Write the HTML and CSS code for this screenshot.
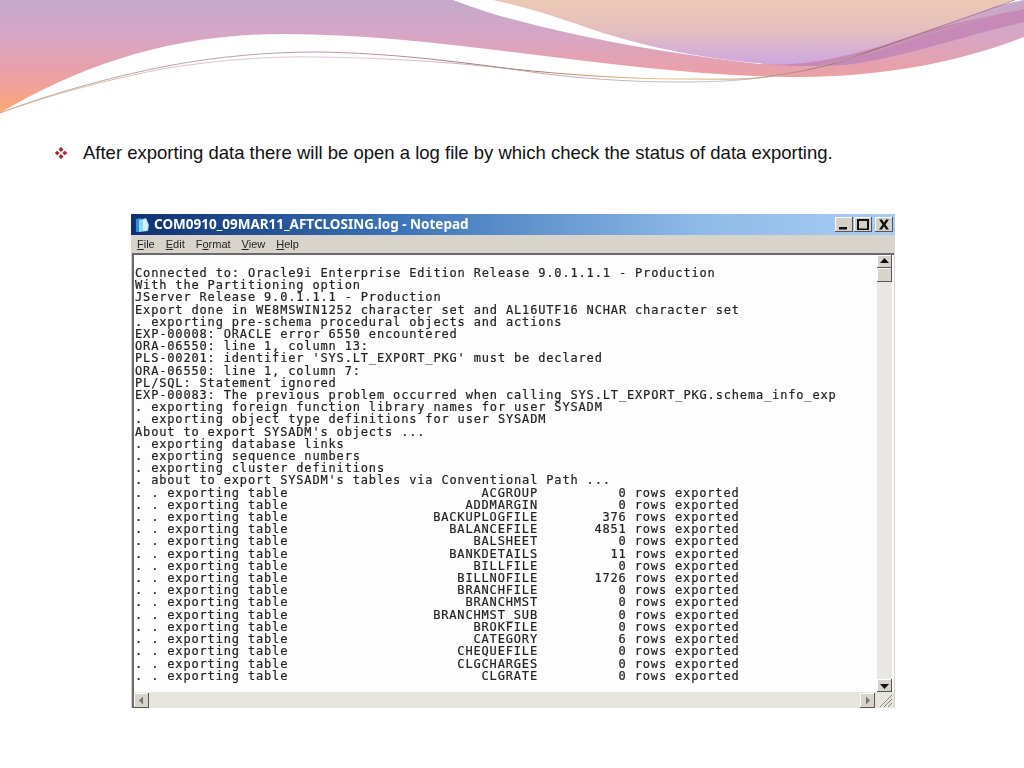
FILE: index.html
```html
<!DOCTYPE html>
<html lang="en">
<head>
<meta charset="utf-8">
<title>Export log</title>
<link rel="stylesheet" href="styles.css">
</head>
<body>
<svg class="banner" viewBox="0 0 1024 115" width="1024" height="115" aria-hidden="true">
  <defs>
    <linearGradient id="mainGrad" gradientUnits="userSpaceOnUse" x1="0" y1="0" x2="0" y2="115">
      <stop offset="0" stop-color="#c5a9cc"/>
      <stop offset="0.3" stop-color="#d6a6c6"/>
      <stop offset="0.6" stop-color="#e9a0aa"/>
      <stop offset="0.8" stop-color="#f3a292"/>
      <stop offset="1" stop-color="#fdaa6c"/>
    </linearGradient>
    <linearGradient id="peachGrad" gradientUnits="userSpaceOnUse" x1="0" y1="0" x2="0" y2="66">
      <stop offset="0" stop-color="#ebc9b4"/>
      <stop offset="0.45" stop-color="#e4bfbe"/>
      <stop offset="1" stop-color="#cda6e0"/>
    </linearGradient>
    <linearGradient id="lineA" gradientUnits="userSpaceOnUse" x1="0" y1="0" x2="1024" y2="0">
      <stop offset="0" stop-color="#c98a6a"/>
      <stop offset="0.2" stop-color="#a88aa0"/>
      <stop offset="0.35" stop-color="#a8789a"/>
      <stop offset="0.5" stop-color="#8a4a3a"/>
      <stop offset="0.65" stop-color="#e5b45a"/>
      <stop offset="0.8" stop-color="#8a5a4a"/>
      <stop offset="1" stop-color="#a87a88"/>
    </linearGradient>
    <linearGradient id="lineB" gradientUnits="userSpaceOnUse" x1="0" y1="0" x2="1024" y2="0">
      <stop offset="0" stop-color="#c9b090"/>
      <stop offset="0.35" stop-color="#d8bcd8"/>
      <stop offset="0.5" stop-color="#b0909a"/>
      <stop offset="0.7" stop-color="#b4b4b0"/>
      <stop offset="1" stop-color="#c4a0a8"/>
    </linearGradient>
  </defs>
  <path fill="url(#mainGrad)" d="M0 0H1024V37C960 62 880 78 790 77C700 76 610 64 512 52C440 43 360 34 283 34C170 34 80 66 0 113Z"/>
  <path fill="#fff" d="M453 0C490 14 520 22 560 31C630 47 700 57 760 64L830 40L1024 0Z"/>
  <path fill="url(#peachGrad)" d="M493 0C530 8 560 18 600 32C650 48 710 60 770 64C830 68 880 50 930 31C965 18 1000 4 1015 0Z"/>
  <path fill="#c78ab8" d="M755 64C810 68 860 54 930 30C965 20 1000 14 1024 9V22C980 32 940 45 890 57C860 64 840 66 820 66C800 66 780 66 755 64Z"/>
  <path fill="none" stroke="url(#lineA)" stroke-width="0.8" d="M0 113C50 94 110 77 167 66C220 56 270 52 317 52C390 53 450 61 512 69C570 75 630 79 679 79C720 79 745 80 765 77C800 72 830 66 860 55C920 33 975 15 1015 0"/>
  <path fill="none" stroke="url(#lineB)" stroke-width="0.8" d="M8 110C60 92 115 78 167 68C220 60 270 56 317 57C390 58 450 62 512 69C560 77 620 82 680 82C720 82 745 80 767 77C800 72 840 62 879 50C930 32 985 18 1024 7"/>
</svg>

<div class="bullet">
  <svg class="bullet-mark" viewBox="0 0 14 14" width="14" height="14" aria-hidden="true">
    <path d="M7 .8 9.4 3.4 7 6 4.6 3.4Z"/>
    <path d="M7 8 9.4 10.6 7 13.2 4.6 10.6Z"/>
    <path d="M3.2 4.7 5.7 7 3.2 9.3.8 7Z"/>
    <path d="M10.8 4.7 13.2 7 10.8 9.3 8.3 7Z"/>
  </svg>
  <p class="bullet-text">After exporting data there will be open a log file by which check the status of data exporting.</p>
</div>

<div class="window">
  <div class="titlebar">
    <svg class="app-icon" viewBox="0 0 16 16" width="16" height="16" aria-hidden="true">
      <path fill="#2f8fd8" d="M1 2 6 1V15L1 15Z"/>
      <path fill="#8fd8f0" d="M4 3 11 1 14 8 13 14 4 15Z"/>
      <path fill="#d2f2f2" d="M8 3 11 2 13 8 12 13 8 14Z"/>
    </svg>
    <span class="title">COM0910_09MAR11_AFTCLOSING.log - Notepad</span>
    <div class="controls">
      <span class="ctl"><svg viewBox="0 0 18 15" width="18" height="15"><path d="M4 10H12V12.5H4Z"/></svg></span>
      <span class="ctl"><svg viewBox="0 0 18 15" width="18" height="15"><path d="M3 2H15V13H3ZM5 4V11.5H13V4Z" fill-rule="evenodd"/></svg></span>
      <span class="ctl ctl-close"><svg viewBox="0 0 18 15" width="18" height="15"><path d="M4 2.5H7L9 5.8 11 2.5H14L10.5 7.5 14 12.5H11L9 9.2 7 12.5H4L7.5 7.5Z"/></svg></span>
    </div>
  </div>
  <div class="menubar">
    <span><u>F</u>ile</span>
    <span><u>E</u>dit</span>
    <span>F<u>o</u>rmat</span>
    <span><u>V</u>iew</span>
    <span><u>H</u>elp</span>
  </div>
  <div class="client">
    <div class="doc">
      <div class="log">
        <div>Connected to: Oracle9i Enterprise Edition Release 9.0.1.1.1 - Production</div>
        <div>With the Partitioning option</div>
        <div>JServer Release 9.0.1.1.1 - Production</div>
        <div>Export done in WE8MSWIN1252 character set and AL16UTF16 NCHAR character set</div>
        <div>. exporting pre-schema procedural objects and actions</div>
        <div>EXP-00008: ORACLE error 6550 encountered</div>
        <div>ORA-06550: line 1, column 13:</div>
        <div>PLS-00201: identifier 'SYS.LT_EXPORT_PKG' must be declared</div>
        <div>ORA-06550: line 1, column 7:</div>
        <div>PL/SQL: Statement ignored</div>
        <div>EXP-00083: The previous problem occurred when calling SYS.LT_EXPORT_PKG.schema_info_exp</div>
        <div>. exporting foreign function library names for user SYSADM</div>
        <div>. exporting object type definitions for user SYSADM</div>
        <div>About to export SYSADM's objects ...</div>
        <div>. exporting database links</div>
        <div>. exporting sequence numbers</div>
        <div>. exporting cluster definitions</div>
        <div>. about to export SYSADM's tables via Conventional Path ...</div>
        <div class="row"><span>. . exporting table</span><span>ACGROUP</span><span>0</span><span>rows exported</span></div>
        <div class="row"><span>. . exporting table</span><span>ADDMARGIN</span><span>0</span><span>rows exported</span></div>
        <div class="row"><span>. . exporting table</span><span>BACKUPLOGFILE</span><span>376</span><span>rows exported</span></div>
        <div class="row"><span>. . exporting table</span><span>BALANCEFILE</span><span>4851</span><span>rows exported</span></div>
        <div class="row"><span>. . exporting table</span><span>BALSHEET</span><span>0</span><span>rows exported</span></div>
        <div class="row"><span>. . exporting table</span><span>BANKDETAILS</span><span>11</span><span>rows exported</span></div>
        <div class="row"><span>. . exporting table</span><span>BILLFILE</span><span>0</span><span>rows exported</span></div>
        <div class="row"><span>. . exporting table</span><span>BILLNOFILE</span><span>1726</span><span>rows exported</span></div>
        <div class="row"><span>. . exporting table</span><span>BRANCHFILE</span><span>0</span><span>rows exported</span></div>
        <div class="row"><span>. . exporting table</span><span>BRANCHMST</span><span>0</span><span>rows exported</span></div>
        <div class="row"><span>. . exporting table</span><span>BRANCHMST_SUB</span><span>0</span><span>rows exported</span></div>
        <div class="row"><span>. . exporting table</span><span>BROKFILE</span><span>0</span><span>rows exported</span></div>
        <div class="row"><span>. . exporting table</span><span>CATEGORY</span><span>6</span><span>rows exported</span></div>
        <div class="row"><span>. . exporting table</span><span>CHEQUEFILE</span><span>0</span><span>rows exported</span></div>
        <div class="row"><span>. . exporting table</span><span>CLGCHARGES</span><span>0</span><span>rows exported</span></div>
        <div class="row"><span>. . exporting table</span><span>CLGRATE</span><span>0</span><span>rows exported</span></div>
      </div>
      <div class="vscroll">
        <span class="btn"><svg viewBox="0 0 15 13" width="15" height="13"><path d="M7.5 3 12 8H3Z"/></svg></span>
        <span class="btn thumb"></span>
        <span class="track"></span>
        <span class="btn"><svg viewBox="0 0 15 13" width="15" height="13"><path d="M3 5H12L7.5 10Z"/></svg></span>
      </div>
    </div>
    <div class="hscroll">
      <span class="btn hbtn"><svg viewBox="0 0 15 15" width="15" height="15"><path d="M5 7.5 9 3.5V11.5Z"/></svg></span>
      <span class="track"></span>
      <span class="btn hbtn"><svg viewBox="0 0 15 15" width="15" height="15"><path d="M10 7.5 6 3.5V11.5Z"/></svg></span>
      <svg class="grip" viewBox="0 0 17 15" width="17" height="15"><path d="M15 2 3 14M15 6 7 14M15 10 11 14"/></svg>
    </div>
  </div>
</div>
</body>
</html>
```
FILE: styles.css
```css
html, body {
  margin: 0;
  padding: 0;
  background: #fff;
}
body {
  width: 1024px;
  height: 768px;
  overflow: hidden;
}
.banner {
  display: block;
}
.bullet {
  display: flex;
  align-items: center;
  height: 76px;
  padding-left: 54px;
}
.bullet-mark {
  flex: none;
  fill: #b3202e;
}
.bullet-text {
  margin: 0 0 0 15px;
  font: 18.5px/22px "Liberation Sans", Arial, sans-serif;
  color: #111;
  white-space: nowrap;
}
.window {
  display: flex;
  flex-direction: column;
  width: 764px;
  height: 494px;
  margin: 23px 0 0 131px;
  background: #d8d4cc;
  filter: blur(0.35px);
}
.titlebar {
  display: flex;
  align-items: center;
  height: 21px;
  padding: 0 2px 0 4px;
  background: linear-gradient(90deg, #0e3072 0, #3d74b8 35%, #8fbbe8 75%, #a9cdf2 100%);
}
.app-icon {
  flex: none;
}
.title {
  margin-left: 3px;
  font: bold 13.5px/21px "Noto Sans", sans-serif;
  color: #fff;
  white-space: nowrap;
}
.controls {
  display: flex;
  gap: 1px;
  margin-left: auto;
}
.ctl {
  display: block;
  width: 18px;
  height: 15px;
  background: #d4d0c8;
  box-shadow: inset -1px -1px 0 #555, inset 1px 1px 0 #fff;
}
.ctl svg {
  display: block;
  fill: #111;
}
.ctl-close {
  margin-left: 2px;
}
.menubar {
  display: flex;
  gap: 11px;
  align-items: center;
  height: 18px;
  padding-left: 6px;
  font: 11px/18px "Liberation Sans", Arial, sans-serif;
  color: #222;
}
.client {
  display: flex;
  flex-direction: column;
  flex: 1;
  min-height: 0;
  margin: 0 1px 0 1px;
  border-top: 2px solid #6a6a6a;
  border-left: 2px solid #6a6a6a;
}
.doc {
  display: flex;
  flex: 1;
  min-height: 0;
  background: #fdfdfd;
}
.log {
  --cw: 8.06px;
  flex: 1;
  padding: 12px 0 0 1px;
  font: 12px/12.2px "DejaVu Sans Mono", "Liberation Mono", monospace;
  letter-spacing: 0.84px;
  color: #222;
  -webkit-text-stroke: 0.2px #222;
  overflow: hidden;
}
.log > div {
  white-space: pre;
}
.row {
  display: grid;
  grid-template-columns: calc(19 * var(--cw)) calc(31 * var(--cw)) calc(11 * var(--cw)) auto;
}
.row span:nth-child(2),
.row span:nth-child(3) {
  text-align: right;
}
.row span:nth-child(4) {
  padding-left: var(--cw);
}
.vscroll {
  display: flex;
  flex-direction: column;
  flex: none;
  width: 15px;
  margin-right: 2px;
  background: #e9e8e2;
}
.btn {
  display: block;
  flex: none;
  width: 15px;
  height: 13px;
  background: #d8d4cc;
  box-shadow: inset -1px -1px 0 #555, inset 1px 1px 0 #fff;
}
.btn svg {
  display: block;
  fill: #111;
}
.thumb {
  height: 14px;
}
.track {
  display: block;
  flex: 1;
}
.hscroll {
  display: flex;
  align-items: center;
  flex: none;
  height: 16px;
  background: #e6e5de;
}
.hbtn {
  height: 15px;
}
.hbtn svg {
  fill: #777;
}
.grip {
  flex: none;
  margin-left: 2px;
  stroke: #8a8a84;
  fill: none;
}
```
